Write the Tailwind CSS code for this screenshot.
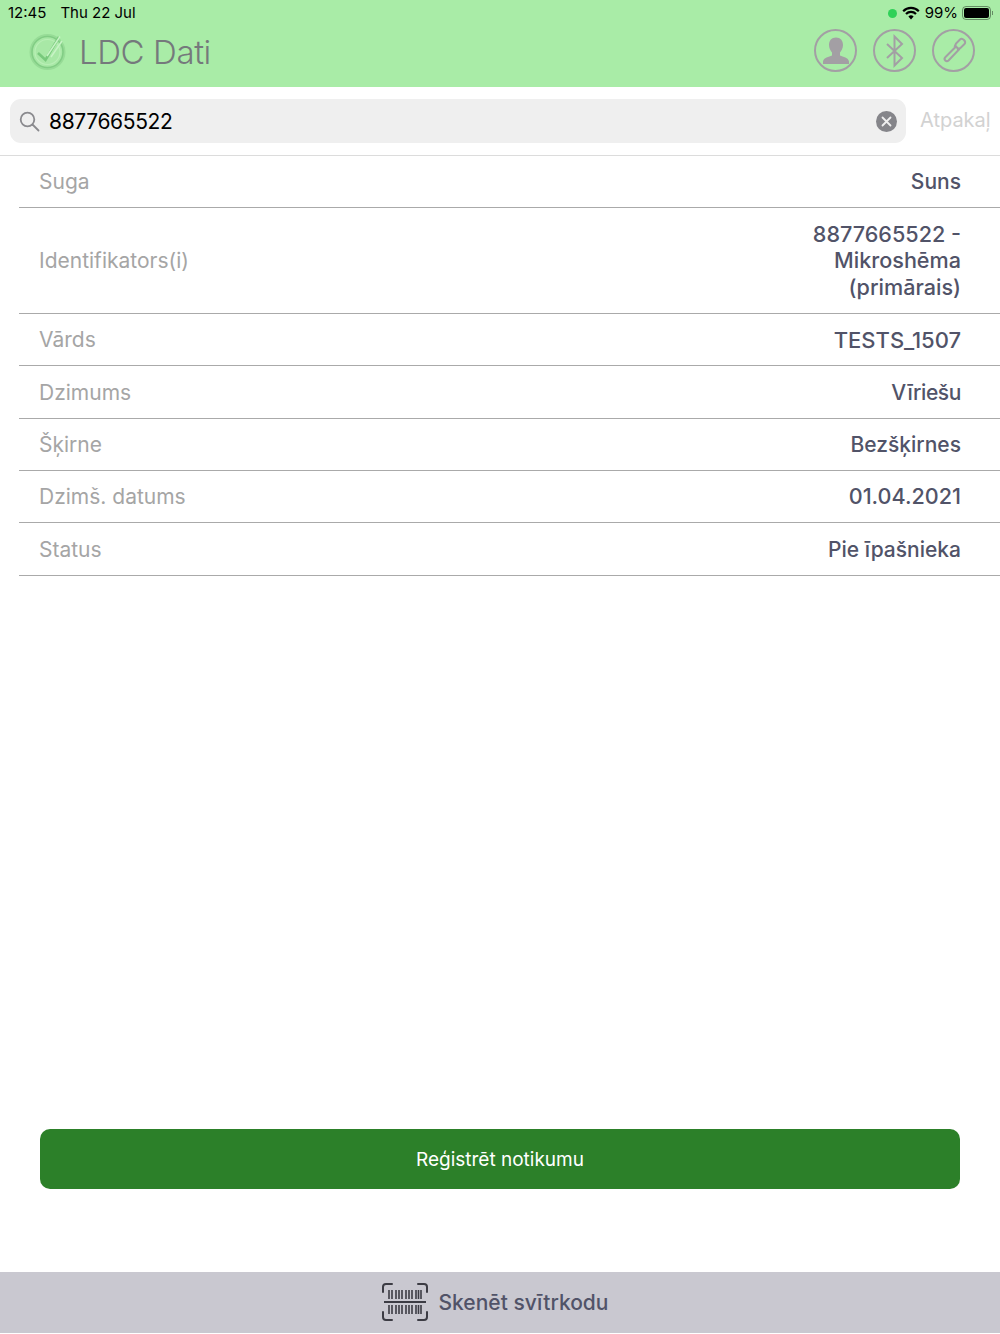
<!DOCTYPE html>
<html lang="lv">
<head>
  <meta charset="UTF-8" />
  <meta name="viewport" content="width=device-width, initial-scale=1.0" />
  <title>LDC Dati</title>
  <script src="https://cdn.jsdelivr.net/npm/@tailwindcss/browser@4"></script>
</head>
<body class="bg-white font-['Inter','Liberation_Sans',sans-serif]">
  <div class="w-[1000px] h-[1334px] flex flex-col overflow-hidden">

    <!-- header -->
    <header class="h-[87px] shrink-0 bg-[#a9eca7] flex flex-col">
      <div class="h-[25px] pt-[1px] flex items-center justify-between pl-2 pr-[7px] text-[15px] text-black">
        <div class="flex gap-[14px]"><span>12:45</span><span>Thu 22 Jul</span></div>
        <div class="flex items-center">
          <span class="w-[9px] h-[9px] rounded-full bg-[#30d158] mr-[5px]"></span>
          <svg class="w-[18px] h-[14px] mr-[5px]" viewBox="0 0 18 14" fill="none" stroke="#000" stroke-width="2.2">
            <path d="M1.2 5.2a11 11 0 0 1 15.6 0" />
            <path d="M4 8a7 7 0 0 1 10 0" />
            <path d="M9 13.6l-2.6-3a3.6 3.6 0 0 1 5.200 0z" fill="#000" stroke="none" />
          </svg>
          <span class="mr-[4px]">99%</span>
          <span class="w-[29px] h-[14px] rounded-[4px] border border-black/40 p-[1px] flex"><span class="flex-1 bg-black rounded-[2px]"></span></span>
          <span class="w-[1px] h-1 bg-black/40 ml-[1px]"></span>
        </div>
      </div>
      <div class="flex-1 flex items-start justify-between pl-[27px] pr-[25px]">
        <div class="flex items-center gap-[11px] mt-[6px]">
          <svg class="w-[41px] h-[41px]" viewBox="0 0 41 41" fill="none">
            <circle cx="20.500" cy="21" r="18" fill="#97dc97" />
            <circle cx="20.500" cy="21" r="15.500" fill="#a8e8a6" stroke="#82cd85" stroke-width="1.600" />
            <circle cx="20.500" cy="21" r="12.500" stroke="#b9efb6" stroke-width="1.200" />
            <path d="M11 22l7.500 7L32 6" stroke="#78c97c" stroke-width="2.600" />
            <path d="M20 25L33 5.500M24 26L35 10" stroke="#c8f3c6" stroke-width="1.500" />
          </svg>
          <span class="text-[33px] leading-[40px] font-light text-[#75797c] tracking-[-0.4px]">LDC Dati</span>
        </div>
        <div class="flex gap-[16px] mt-[4px]">
          <button class="w-[43px] h-[43px] rounded-full border-[2px] border-[#a39fa4] flex items-center justify-center">
            <svg class="w-[30px] h-[30px]" viewBox="0 0 30 30" fill="#a39fa4">
              <path d="M15 1.500c4.500 0 7 3 7 7.500 0 3-1.500 6-3 7.500v3c3 1.500 8.500 2 9 6v2.500H2v-2.500c.5-4 6-4.500 9-6v-3C9.500 15 8 12 8 9c0-4.500 2.500-7.500 7-7.500z" />
            </svg>
          </button>
          <button class="w-[43px] h-[43px] rounded-full border-[2px] border-[#a39fa4] flex items-center justify-center">
            <svg class="w-[20px] h-[34px]" viewBox="0 0 20 34" fill="none" stroke="#a39fa4" stroke-width="2">
              <path d="M2 10l15 14-7.500 7.500V2.500L17 10 2 24" />
            </svg>
          </button>
          <button class="w-[43px] h-[43px] rounded-full border-[2px] border-[#a39fa4] flex items-center justify-center">
            <svg class="w-[30px] h-[30px]" viewBox="0 0 30 30" fill="none" stroke="#a39fa4" stroke-width="2">
              <path d="M17 10.500l3 3L9.500 24.500c-1 1-2.200 1-3.200 0s-1-2.200 0-3.200z" />
              <path d="M15.500 11l1.500-3.500L21 3.500c1-1 2.500-1 4 .5s1.500 3 .5 4L21.500 12l-3.500 1.500" />
            </svg>
          </button>
        </div>
      </div>
    </header>

    <!-- search -->
    <div class="h-[69px] shrink-0 border-b border-[#dcdcdc] pt-[12px] pl-[10px] flex items-start gap-[14px]">
      <div class="w-[896px] h-[44px] shrink-0 rounded-[11px] bg-[#efefef] flex items-center pl-[9px] pr-[9px]">
        <svg class="w-[21px] h-[21px] shrink-0" viewBox="0 0 21 21" fill="none" stroke="#8a8a8e" stroke-width="1.800">
          <circle cx="8.500" cy="8.500" r="6.800" />
          <path d="M13.500 13.500l6 6" stroke-linecap="round" />
        </svg>
        <span class="ml-[9px] pt-[2px] flex-1 text-[21px] tracking-[-0.35px] text-black">8877665522</span>
        <span class="w-[21px] h-[21px] rounded-full bg-[#85858a] flex items-center justify-center">
          <svg class="w-[11px] h-[11px]" viewBox="0 0 11 11" stroke="#efefef" stroke-width="1.800" stroke-linecap="round">
            <path d="M1.500 1.500l8 8M9.500 1.500l-8 8" />
          </svg>
        </span>
      </div>
      <span class="text-[20px] leading-[42px] text-[#d2d2d2] whitespace-nowrap">Atpakaļ</span>
    </div>

    <!-- details -->
    <dl class="pl-[19px] text-[21px] leading-[26.500px]">
      <div class="h-[52px] pt-[2px] border-b border-[#aaaaaa] flex items-center justify-between pl-[20px] pr-[39px]">
        <dt class="text-[#a5a5a5]">Suga</dt>
        <dd class="text-[#515368] font-medium text-right">Suns</dd>
      </div>
      <div class="h-[106px] pt-[2px] border-b border-[#aaaaaa] flex items-center justify-between pl-[20px] pr-[39px]">
        <dt class="text-[#a5a5a5]">Identifikators(i)</dt>
        <dd class="text-[#515368] font-medium text-right w-[170px] text-[21.600px] mb-[2px]">8877665522 - Mikroshēma (primārais)</dd>
      </div>
      <div class="h-[52px] pt-[2px] border-b border-[#aaaaaa] flex items-center justify-between pl-[20px] pr-[39px]">
        <dt class="text-[#a5a5a5]">Vārds</dt>
        <dd class="text-[#515368] font-medium text-right text-[22px]">TESTS_1507</dd>
      </div>
      <div class="h-[53px] pt-[2px] border-b border-[#aaaaaa] flex items-center justify-between pl-[20px] pr-[39px]">
        <dt class="text-[#a5a5a5]">Dzimums</dt>
        <dd class="text-[#515368] font-medium text-right tracking-[-0.4px]">Vīriešu</dd>
      </div>
      <div class="h-[52px] pt-[2px] border-b border-[#aaaaaa] flex items-center justify-between pl-[20px] pr-[39px]">
        <dt class="text-[#a5a5a5]">Šķirne</dt>
        <dd class="text-[#515368] font-medium text-right">Bezšķirnes</dd>
      </div>
      <div class="h-[52px] pt-[2px] border-b border-[#aaaaaa] flex items-center justify-between pl-[20px] pr-[39px]">
        <dt class="text-[#a5a5a5]">Dzimš. datums</dt>
        <dd class="text-[#515368] font-medium text-right text-[21.600px] mb-[2px]">01.04.2021</dd>
      </div>
      <div class="h-[53px] pt-[2px] border-b border-[#aaaaaa] flex items-center justify-between pl-[20px] pr-[39px]">
        <dt class="text-[#a5a5a5]">Status</dt>
        <dd class="text-[#515368] font-medium text-right">Pie īpašnieka</dd>
      </div>
    </dl>

    <div class="flex-1"></div>

    <!-- actions -->
    <div class="px-[40px] pb-[83px]">
      <button class="w-full h-[60px] pt-[2px] rounded-[10px] bg-[#2c8029] text-white text-[19px]">Reģistrēt notikumu</button>
    </div>
    <div class="h-[61px] mb-[1px] shrink-0 bg-[#c9c8d0] flex items-center justify-center gap-[10px] pr-[11px]">
      <svg class="w-[48px] h-[38px] mt-[-1px]" viewBox="0 0 48 38" fill="none" stroke="#3c3c44">
        <path d="M2 9V4a3 3 0 0 1 3-3h6M37 1h6a3 3 0 0 1 3 3v5M2 29v5a3 3 0 0 0 3 3h6M37 37h6a3 3 0 0 0 3-3v-5" stroke-width="2" stroke-linecap="round" />
        <path d="M3 19h42" stroke-width="2.200" />
        <path d="M8 7v9M11 7v9M15 7v9M18 7v9M21 7v9M25 7v9M28 7v9M31 7v9M35 7v9M37.500 7v9M40 7v9M8 22v9M11 22v9M15 22v9M18 22v9M21 22v9M25 22v9M28 22v9M31 22v9M35 22v9M37.500 22v9M40 22v9" stroke-width="1.600" />
      </svg>
      <span class="text-[21px] text-[#515368] font-medium">Skenēt svītrkodu</span>
    </div>
  </div>
</body>
</html>
